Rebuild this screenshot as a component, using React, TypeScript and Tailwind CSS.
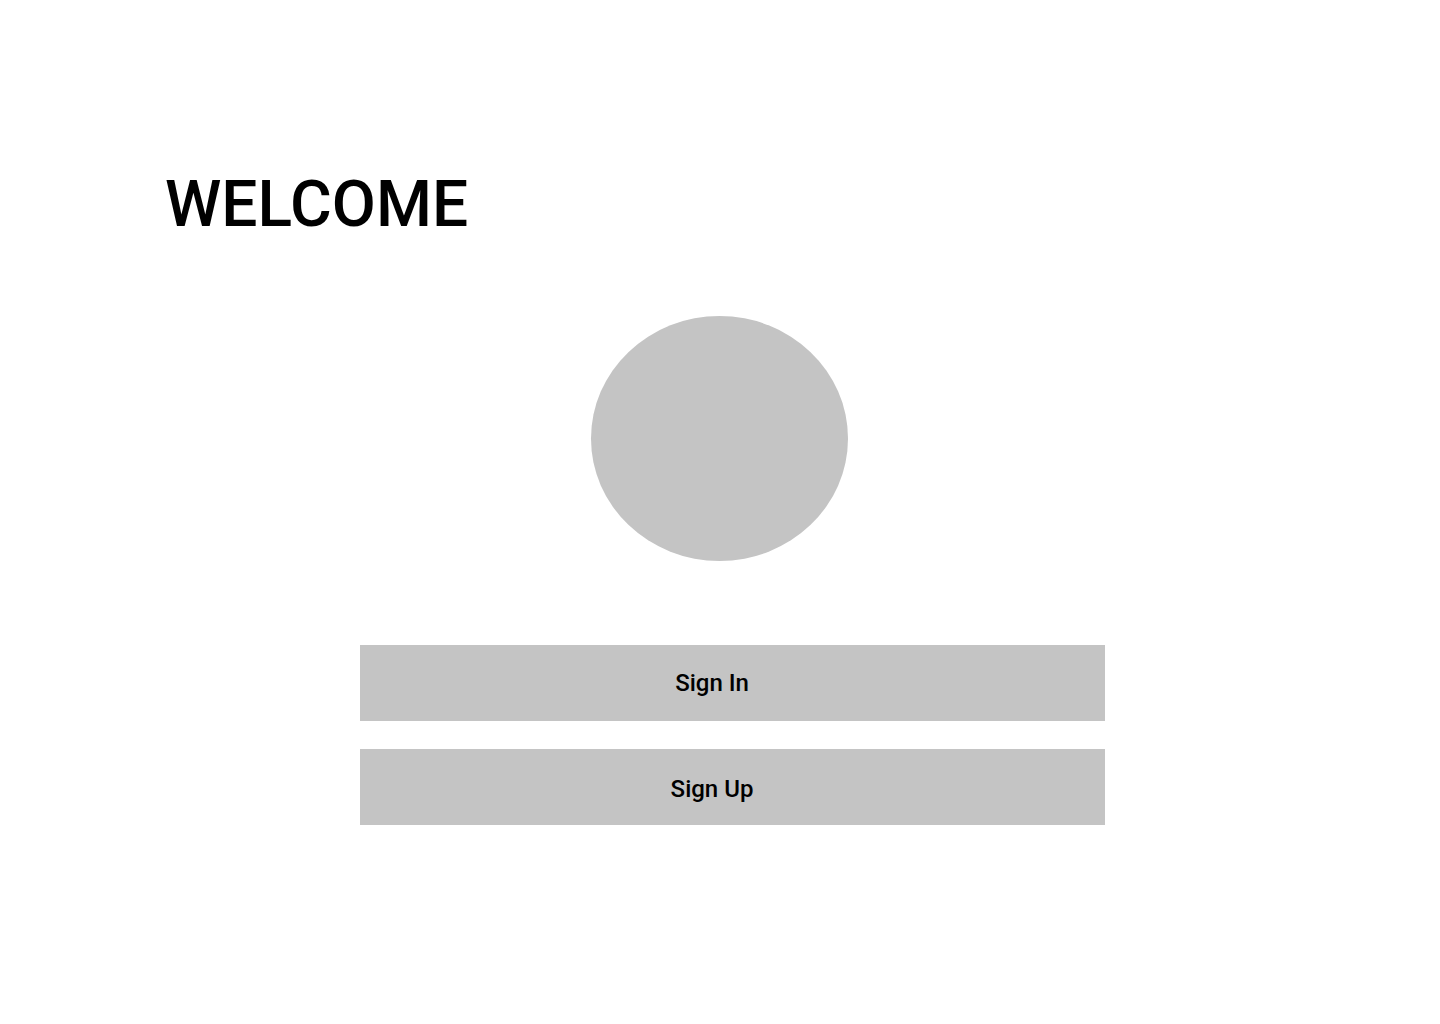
export default function App() {
  return (
    <div className="min-h-screen w-full bg-white font-['Roboto',sans-serif] text-black">
      <div className="flex flex-col pt-[173px]">
        {/* Heading */}
        <h1 className="pl-[165px] text-[64px] leading-none font-medium">WELCOME</h1>

        {/* Avatar placeholder */}
        <div className="mt-[79px] ml-[591px] h-[245px] w-[257px] rounded-[50%] bg-[#c4c4c4]" />

        {/* Actions */}
        <div className="mt-[84px] ml-[360px] flex w-[745px] flex-col gap-[28px]">
          <button className="flex h-[76px] items-center justify-center bg-[#c4c4c4] pr-[41px] text-[24px] font-medium">
            Sign In
          </button>
          <button className="flex h-[76px] items-center justify-center bg-[#c4c4c4] pt-[4px] pr-[41px] text-[24px] font-medium">
            Sign Up
          </button>
        </div>
      </div>
    </div>
  );
}
